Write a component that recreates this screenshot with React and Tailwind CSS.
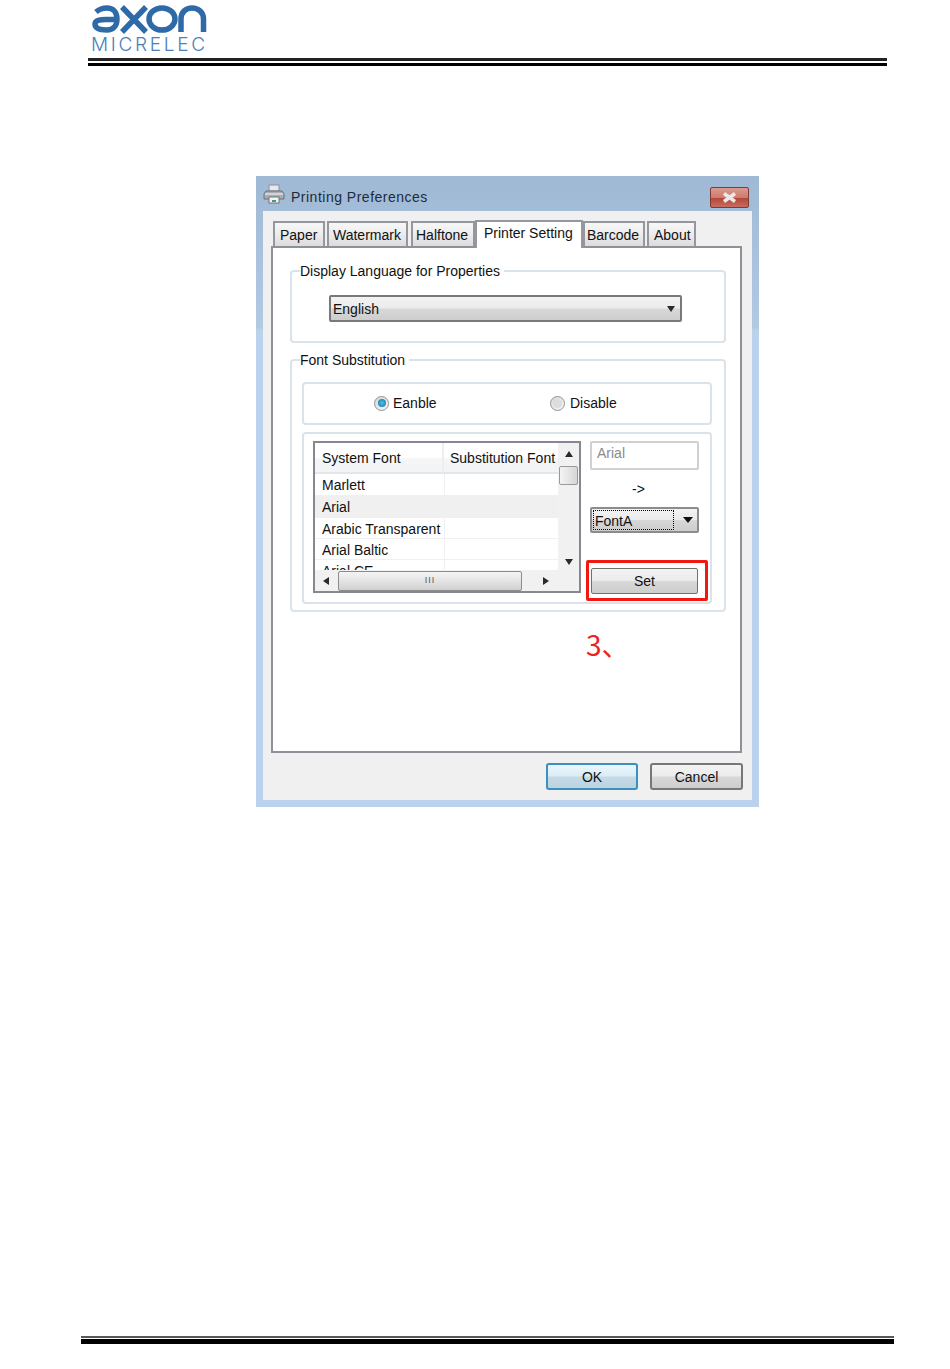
const uiFont = 'font-["Liberation_Sans",Arial,sans-serif]'
const btnBg = 'bg-[linear-gradient(#f3f3f3_0%,#ebebeb_48%,#d8d8d8_52%,#cdcdcd_100%)]'

function Logo() {
  return (
    <div className="flex flex-col w-[118px]">
      <svg width="118" height="30" viewBox="92 5 118 30" aria-label="axon" className="block">
        <g fill="none" stroke="#2f6aa8" strokeWidth="5.500">
          <path d="M96 12 C100 8.500 104 8 107 8 C113 8 117 12 117 19 C117 26 113 30 107 30 C100 30 95 28 95 24 C95 20 100 19.500 106 19.500 L116 19.500" />
          <path d="M122 7 L146 32 M146 7 L122 32" />
          <ellipse cx="162" cy="19" rx="13" ry="11" />
          <path d="M181 32 V19 C181 12 186 8 192 8 C198 8 203.500 12 203.500 19 V32" />
        </g>
      </svg>
      <span className='mt-[1px] -ml-[1px] text-[19px] leading-[17px] font-light text-[#4a80b9] tracking-[2.7px] whitespace-nowrap font-["Inter",sans-serif]'>MICRELEC</span>
    </div>
  )
}

function PrinterIcon() {
  return (
    <svg width="22" height="20" viewBox="0 0 22 20">
      <rect x="6" y="1" width="10" height="6" fill="#e8e8ea" stroke="#8d9099" />
      <path d="M3 7 H19 L21 10 V15 H1 V10 Z" fill="#a9adb4" stroke="#6d7078" />
      <rect x="2" y="9" width="18" height="2" fill="#d2d4d8" />
      <rect x="6" y="13" width="10" height="6" fill="#f4f4f4" stroke="#73767d" />
      <rect x="9" y="16" width="4" height="2" fill="#3c9c86" />
    </svg>
  )
}

function Tab({ label, className, active }) {
  if (active) {
    return (
      <div className={`h-[28px] -mb-[2px] bg-white border-2 border-b-0 border-[#94979d] pt-[1px] text-[14px] leading-[20px] text-[#111] whitespace-nowrap relative z-10 ${className}`}>
        {label}
      </div>
    )
  }
  return (
    <div className={`h-[25px] bg-[linear-gradient(#f7f7f7_0%,#ececec_50%,#dcdcdc_100%)] border-2 border-b-0 border-[#94979d] pt-[2px] text-[14px] leading-[20px] text-[#111] whitespace-nowrap ${className}`}>
      {label}
    </div>
  )
}

function GroupBox({ legend, className, children }) {
  return (
    <div className={`relative border-2 border-[#dbe3ea] rounded-[4px] ${className}`}>
      {legend && (
        <span className="absolute -top-[11px] left-[8px] bg-white pr-[4px] text-[14px] leading-[20px] text-[#111]">
          {legend}
        </span>
      )}
      {children}
    </div>
  )
}

function Triangle({ dir, className }) {
  const points = { up: '0,6 8,6 4,0', down: '0,0 8,0 4,6', left: '6,0 6,8 0,4', right: '0,0 0,8 6,4' }
  return (
    <svg width="8" height="8" viewBox="0 0 8 8" className={className}>
      <polygon points={points[dir]} fill="#2a2a2a" />
    </svg>
  )
}

function Radio({ checked }) {
  return (
    <span className="w-[15px] h-[15px] rounded-full border border-[#8f9296] bg-[linear-gradient(135deg,#d8d8d8,#f7f7f7)] flex items-center justify-center">
      {checked ? (
        <span className="w-[8px] h-[8px] rounded-full bg-[radial-gradient(circle,#4fc2ea,#0f6fa5)]" />
      ) : (
        <span className="w-[9px] h-[9px] rounded-full bg-[#dcdcdc]" />
      )}
    </span>
  )
}

const fontRows = [
  { name: 'Marlett', h: 'h-[22px]' },
  { name: 'Arial', h: 'h-[22px]', selected: true },
  { name: 'Arabic Transparent', h: 'h-[21px]' },
  { name: 'Arial Baltic', h: 'h-[21px]' },
  { name: 'Arial CE', h: 'h-[21px]' },
]

function FontList() {
  return (
    <div className="w-[268px] h-[152px] border-2 border-[#85888f] bg-white flex flex-col">
      <div className="h-[127px] flex">
        <div className="w-[243px] overflow-hidden">
          <div className="h-[31px] flex border-b-2 border-[#e4e6e8] bg-[linear-gradient(#ffffff_0%,#ffffff_50%,#f4f6f8_52%,#f2f4f6_100%)] text-[14px] leading-[20px] text-[#111]">
            <div className="w-[129px] shrink-0 pl-[7px] pt-[5px] border-r-2 border-[#eceef0]">System Font</div>
            <div className="pl-[6px] pt-[5px] whitespace-nowrap">Substitution Font</div>
          </div>
          {fontRows.map((row) => (
            <div
              key={row.name}
              className={`${row.h} flex text-[14px] leading-[20px] text-[#111] border-b border-[#f0f0f0] ${row.selected ? 'bg-[#f0f0f0]' : 'bg-white'}`}
            >
              <div className={`w-[130px] pl-[7px] pt-[1px] whitespace-nowrap ${row.selected ? '' : 'border-r border-[#f0f0f0]'}`}>{row.name}</div>
            </div>
          ))}
        </div>
        <div className="w-[21px] bg-[#f1f1f1] flex flex-col items-center">
          <Triangle dir="up" className="mt-[8px]" />
          <div className="w-[19px] h-[19px] mt-[7px] rounded-[2px] border border-[#9a9a9a] bg-[linear-gradient(90deg,#f4f4f4,#d6d6d6)]" />
          <Triangle dir="down" className="mt-[74px]" />
        </div>
      </div>
      <div className="flex-1 bg-[#f1f1f1] flex items-center">
        <Triangle dir="left" className="ml-[8px]" />
        <div className="ml-[7px] w-[184px] h-[20px] rounded-[2px] border border-[#8c8c8c] bg-[linear-gradient(#f4f4f4,#e4e4e4_50%,#cfcfcf)] flex items-center justify-center">
          <span className="text-[9px] leading-none text-[#555] tracking-[1px]">III</span>
        </div>
        <Triangle dir="right" className="ml-[21px]" />
      </div>
    </div>
  )
}

function RightColumn() {
  return (
    <div className="w-[122px] ml-[5px] flex flex-col">
      <div className="ml-[4px] w-[109px] h-[29px] border-2 border-[#d0d0d0] rounded-[2px] pl-[5px] text-[14px] leading-[20px] text-[#8b8b8b] bg-white">
        Arial
      </div>
      <div className="h-[37px] flex justify-center items-center pr-[17px] text-[14px] leading-[16px] text-[#111]">-&gt;</div>
      <div className={`ml-[4px] w-[109px] h-[26px] border-2 border-[#8c8c8c] rounded-[2px] ${btnBg} flex items-center pl-[1px]`}>
        <div className="w-[81px] h-[20px] border border-dotted border-black text-[14px] leading-[20px] text-[#111] pl-[1px]">FontA</div>
        <svg width="10" height="6" viewBox="0 0 10 6" className="ml-[9px]">
          <polygon points="0,0 10,0 5,6" fill="#111" />
        </svg>
      </div>
      <div className="mt-[27px] w-[122px] h-[41px] border-[3px] border-[#f01810] rounded-[2px] flex items-center pl-[2px]">
        <div className={`w-[107px] h-[26px] mt-[1px] border border-[#707070] rounded-[2px] ${btnBg} text-center text-[14px] leading-[24px] text-[#111]`}>Set</div>
      </div>
    </div>
  )
}

function Dialog() {
  return (
    <div className={`ml-[256px] mt-[110px] w-[503px] h-[631px] px-[7px] pb-[7px] flex flex-col bg-[linear-gradient(#9fb9d5_0%,#b2c9e2_24%,#bcd2ec_24.5%,#bcd2ec_100%)] ${uiFont}`}>
      <div className="h-[35px] flex items-center shrink-0">
        <PrinterIcon />
        <span className="ml-[6px] mt-[6px] text-[14px] leading-[20px] text-[#1d2b3a] tracking-[0.5px]">Printing Preferences</span>
        <div className="ml-auto mr-[3px] mt-[7px] w-[39px] h-[21px] border border-[#7d3b36] rounded-[2px] bg-[linear-gradient(#dc9a8f_0%,#cf7a6e_50%,#b5463a_55%,#c76c60_100%)] flex items-center justify-center">
          <svg width="17" height="11" viewBox="0 0 17 11">
            <path d="M3 1.500 L14 9.500 M14 1.500 L3 9.500" stroke="#e9e9e9" strokeWidth="3.500" />
          </svg>
        </div>
      </div>

      <div className="flex-1 bg-[#f0f0f0] flex flex-col">
        <div className="mt-[7px] h-[28px] pl-[10px] flex items-end">
          <Tab label="Paper" className="w-[52px] pl-[5px]" />
          <Tab label="Watermark" className="w-[81px] ml-[2px] pl-[4px]" />
          <Tab label="Halftone" className="w-[64px] ml-[3px] pl-[3px]" />
          <Tab label="Printer Setting" className="w-[108px] pl-[7px]" active />
          <Tab label="Barcode" className="w-[62px] pl-[2px]" />
          <Tab label="About" className="w-[49px] ml-[2px] pl-[5px]" />
        </div>

        <div className="ml-[8px] w-[471px] h-[507px] border-2 border-[#8e9197] bg-white pl-[17px] pt-[22px]">
          <GroupBox legend="Display Language for Properties" className="w-[436px] h-[73px] pl-[37px] pt-[23px]">
            <div className={`w-[353px] h-[27px] border-2 border-[#77797d] rounded-[2px] ${btnBg} flex items-center justify-between pl-[2px] pr-[5px] text-[14px] leading-[20px] text-[#111]`}>
              English
              <Triangle dir="down" className="mt-[3px]" />
            </div>
          </GroupBox>

          <GroupBox legend="Font Substitution" className="mt-[16px] w-[436px] h-[253px] pl-[10px] pt-[21px]">
            <GroupBox className="w-[410px] h-[43px] flex items-center pl-[70px] pb-[1px] text-[14px] leading-[20px] text-[#111]">
              <Radio checked />
              <span className="ml-[4px] w-[157px]">Eanble</span>
              <Radio />
              <span className="ml-[5px]">Disable</span>
            </GroupBox>
            <GroupBox className="mt-[7px] w-[410px] h-[172px] pl-[9px] pt-[7px] flex items-start">
              <FontList />
              <RightColumn />
            </GroupBox>
          </GroupBox>

          <div className='mt-[13px] ml-[296px] text-[28px] leading-[38px] text-[#f02020] font-["Noto_Sans_CJK_SC",sans-serif]'>3、</div>
        </div>

        <div className="mt-[10px] pr-[9px] flex justify-end gap-[12px] text-[14px] text-[#111]">
          <div className="w-[92px] h-[27px] border-2 border-[#3c8fc0] rounded-[3px] bg-[linear-gradient(#eaf6fc_0%,#dcecf5_48%,#c4dae6_52%,#bcd3e0_100%)] text-center leading-[25px]">OK</div>
          <div className={`w-[93px] h-[27px] border-2 border-[#777] rounded-[3px] ${btnBg} text-center leading-[25px]`}>Cancel</div>
        </div>
      </div>
    </div>
  )
}

export default function App() {
  return (
    <div className="w-[950px] h-[1369px] bg-white flex flex-col overflow-hidden">
      <div className="pl-[92px] pt-[5px] h-[58px]">
        <Logo />
      </div>
      <div className="ml-[88px] w-[799px] h-[3px] bg-[#222]" />
      <div className="ml-[88px] mt-[2px] w-[799px] h-[3px] bg-black" />
      <Dialog />
      <div className="mt-auto mb-[25px] ml-[81px] w-[813px]">
        <div className="h-[2px] bg-[#595959]" />
        <div className="mt-[1px] h-[5px] bg-black" />
      </div>
    </div>
  )
}
